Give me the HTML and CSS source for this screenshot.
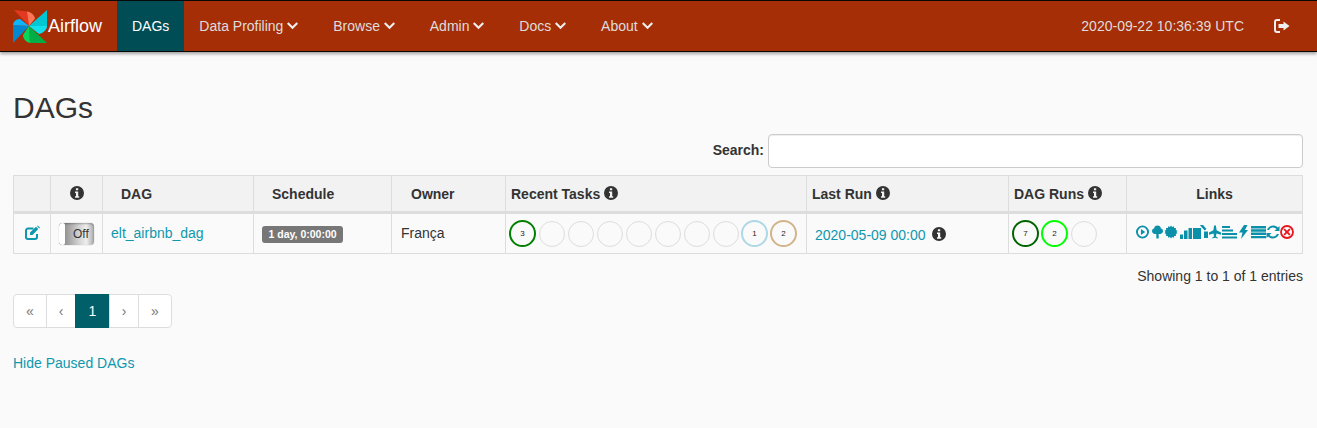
FILE: index.html
```html
<!DOCTYPE html>
<html>
<head>
  <title>DAGs - Airflow</title>
  <link rel="stylesheet" href="styles.css">
</head>
<body>
  <svg class="defs" width="0" height="0">
    <symbol id="i-info" viewBox="0 0 14 14">
      <path fill-rule="evenodd" d="M7 0a7 7 0 1 0 0 14A7 7 0 0 0 7 0zM5.900 2.300h2.300v2H5.900zM5 5.600h3.200v4.700h1v1.500H5v-1.500h1V7.100H5z"/>
    </symbol>
    <symbol id="i-chev" viewBox="0 0 12 8">
      <path d="M1.600 0L6 4.400 10.400 0 12 1.600 6 7.600 0 1.600z"/>
    </symbol>
  </svg>

  <nav class="navbar">
    <a class="brand" href="#">
      <svg class="logo" width="35" height="35" viewBox="0 0 35 35">
        <path fill="#e43921" d="M16 17L1 1l13 1.500z"/>
        <path fill="#ff7557" d="M16 17L14 2.500c4 .5 7 3 8 7z"/>
        <path fill="#0288d1" d="M16 17L0 34V16z"/>
        <path fill="#0cb6ff" d="M16 17L0 16c0-3 3-6 7-6z"/>
        <path fill="#00ad46" d="M16 17l18 17H17z"/>
        <path fill="#04d659" d="M16 17l1 17c-4-1-7-4-7-8z"/>
        <path fill="#00c7d4" d="M16 17L34 1v16z"/>
        <path fill="#11e1ee" d="M16 17l18 0c0 3-3 7-8 8z"/>
      </svg>
      <span>Airflow</span>
    </a>
    <a class="nav-item active" href="#">DAGs</a>
    <a class="nav-item" href="#">Data Profiling <svg class="chev"><use href="#i-chev"/></svg></a>
    <a class="nav-item" href="#">Browse <svg class="chev"><use href="#i-chev"/></svg></a>
    <a class="nav-item" href="#">Admin <svg class="chev"><use href="#i-chev"/></svg></a>
    <a class="nav-item" href="#">Docs <svg class="chev"><use href="#i-chev"/></svg></a>
    <a class="nav-item" href="#">About <svg class="chev"><use href="#i-chev"/></svg></a>
    <div class="nav-right">
      <span class="clock">2020-09-22 10:36:39 UTC</span>
      <svg class="signout" width="16" height="14" viewBox="0 0 16 14">
        <path d="M6 0v2H3a1 1 0 0 0-1 1v8a1 1 0 0 0 1 1h3v2H3a3 3 0 0 1-3-3V3a3 3 0 0 1 3-3z"/>
        <path d="M9.500 2.500L15.500 7l-6 4.500V9H4.500V5h5z"/>
      </svg>
    </div>
  </nav>

  <div class="container">
    <h2>DAGs</h2>

    <div class="search-row">
      <label for="search">Search:</label>
      <input id="search" type="text">
    </div>

    <table class="dags">
      <thead>
        <tr>
          <th class="c-edit"></th>
          <th class="c-toggle"><svg class="info"><use href="#i-info"/></svg></th>
          <th class="c-dag">DAG</th>
          <th class="c-sched">Schedule</th>
          <th class="c-owner">Owner</th>
          <th class="c-tasks">Recent Tasks <svg class="info"><use href="#i-info"/></svg></th>
          <th class="c-last">Last Run <svg class="info"><use href="#i-info"/></svg></th>
          <th class="c-runs">DAG Runs <svg class="info"><use href="#i-info"/></svg></th>
          <th class="c-links">Links</th>
        </tr>
      </thead>
      <tbody>
        <tr>
          <td class="center">
            <svg class="edit" width="15" height="14" viewBox="0 0 15 14">
              <path fill="none" stroke="currentColor" stroke-width="2" d="M8.500 2.500H3A2 2 0 0 0 1 4.500V11a2 2 0 0 0 2 2h7a2 2 0 0 0 2-2V8"/>
              <path d="M5 6.500L11 .8l2.300 2.300L7.500 9H5zM12 0l.8-.5L15 1.700l-.8.800z"/>
            </svg>
          </td>
          <td class="center">
            <div class="toggle"><span class="knob"></span><span class="off">Off</span></div>
          </td>
          <td class="dag-name"><a href="#">elt_airbnb_dag</a></td>
          <td class="sched-cell"><span class="label">1 day, 0:00:00</span></td>
          <td class="owner">França</td>
          <td class="circles-cell">
            <div class="circles">
              <span class="circle success">3</span>
              <span class="circle"></span>
              <span class="circle"></span>
              <span class="circle"></span>
              <span class="circle"></span>
              <span class="circle"></span>
              <span class="circle"></span>
              <span class="circle"></span>
              <span class="circle skipped">1</span>
              <span class="circle upstream">2</span>
            </div>
          </td>
          <td class="last-run"><a href="#">2020-05-09 00:00</a> <svg class="info"><use href="#i-info"/></svg></td>
          <td class="circles-cell">
            <div class="circles">
              <span class="circle finished">7</span>
              <span class="circle running">2</span>
              <span class="circle"></span>
            </div>
          </td>
          <td class="links">
            <svg class="l-play" width="13" height="14" viewBox="0 0 14 14"><circle cx="7" cy="7" r="6" fill="none" stroke="currentColor" stroke-width="2"/><path d="M5.300 3.900L10 7l-4.700 3.100z"/></svg>
            <svg class="l-tree" width="11" height="14" viewBox="0 0 12 14"><path d="M6 0c2.300 0 3.400 1.300 3.500 2.800C11 3.200 12 4.500 12 6c0 1.800-1.400 3.200-3.200 3.200H7.300V14H4.700V9.200H3.200C1.400 9.200 0 7.800 0 6c0-1.500 1-2.800 2.500-3.200C2.600 1.300 3.700 0 6 0z"/></svg>
            <svg class="l-sun" width="12" height="14" viewBox="0 0 13 14"><path d="M6.500 0l1.200 1.700L9.500.8l.4 2 2-.1-.2 2 1.800 1-1.100 1.300 1.100 1.300-1.800 1 .2 2-2-.1-.4 2-1.800-.9L6.500 14l-1.200-1.700-1.800.9-.4-2-2 .1.200-2-1.800-1L.6 7-.5 5.700l1.800-1-.2-2 2 .1.400-2 1.800.9z"/></svg>
            <svg class="l-bars" width="12" height="14" viewBox="0 0 12 14"><path d="M0 9.500h3V14H0zM4 5.500h3.500V14H4zM8.500 3H12v11H8.500z"/></svg>
            <svg class="l-doc" width="16" height="14" viewBox="0 0 16 14"><path d="M0 3h8v11H0zM7 0h3l3.500 4-1.800 1.500L8 1.500zM11 6.500h4V13h-4z"/></svg>
            <svg class="l-plane" width="12" height="14" viewBox="0 0 13 14"><path d="M5.500 0h2l.7 5L13 7.600V10L8 8.500 7.600 12l1.900 1.300V14L6.500 13.300 3.500 14v-.7L5.400 12 5 8.500 0 10V7.600L4.800 5z"/></svg>
            <svg class="l-align" width="15" height="14" viewBox="0 0 15 14"><path d="M0 1h8v2H0zM0 4.500h11v2H0zM0 8h15v2H0zM0 11.500h15v2H0z"/></svg>
            <svg class="l-bolt" width="9" height="14" viewBox="0 0 9 14"><path d="M5 0h3.500L6 5h3L2 14l1.500-6.500H0z"/></svg>
            <svg class="l-just" width="15" height="14" viewBox="0 0 15 14"><path d="M0 1h15v2.400H0zM0 4.300h15v2.400H0zM0 7.600h15V10H0zM0 10.900h15v2.400H0z"/></svg>
            <svg class="l-sync" width="14" height="14" viewBox="0 0 14 14"><path d="M13.500 1v5H8.500l2-2A4.500 4.500 0 0 0 3 5H1a6.500 6.500 0 0 1 10.900-2.400zM.5 13V8h5l-2 2A4.500 4.500 0 0 0 11 9h2a6.500 6.500 0 0 1-10.900 2.400z"/></svg>
            <svg class="del" width="14" height="14" viewBox="0 0 14 14"><circle cx="7" cy="7" r="6" fill="none" stroke="currentColor" stroke-width="1.800"/><path d="M4.800 3.500L7 5.700l2.200-2.200 1.300 1.300L8.300 7l2.200 2.200-1.300 1.300L7 8.300l-2.200 2.200-1.300-1.300L5.700 7 3.500 4.800z"/></svg>
          </td>
        </tr>
      </tbody>
    </table>

    <div class="entries">Showing 1 to 1 of 1 entries</div>

    <ul class="pagination">
      <li><a href="#">«</a></li>
      <li><a href="#">‹</a></li>
      <li class="active"><a href="#">1</a></li>
      <li><a href="#">›</a></li>
      <li><a href="#">»</a></li>
    </ul>

    <div class="hide-paused"><a href="#">Hide Paused DAGs</a></div>
  </div>
</body>
</html>
```

FILE: styles.css
```css
* {
  box-sizing: border-box;
}

body {
  margin: 0;
  font-family: "Liberation Sans", Arial, sans-serif;
  font-size: 14px;
  line-height: 20px;
  background: #fafafa;
  color: #333;
  overflow: hidden;
}

a {
  color: #0e97ae;
  text-decoration: none;
}

.defs {
  display: block;
  height: 0;
}

/* navbar */
.navbar {
  display: flex;
  height: 52px;
  background: #a62e06;
  border-top: 1px solid #080808;
  border-bottom: 1px solid #080808;
  box-shadow: 0 2px 3px rgba(0,0,0,0.35);
  padding-left: 13px;
}

.brand {
  display: flex;
  align-items: center;
  width: 104px;
  color: #fff;
  font-size: 18px;
}

.logo {
  flex: none;
}

.nav-item {
  display: flex;
  align-items: center;
  gap: 4px;
  padding: 0 15px;
  color: #ddd;
}

.nav-item.active {
  background: #004d56;
  color: #fff;
}

.chev {
  width: 11px;
  height: 8px;
  margin-right: 4.850px;
  fill: #eee;
}

.nav-right {
  margin-left: auto;
  display: flex;
  align-items: center;
  color: #ddd;
}

.clock {
  margin-left: 1px;
}

.signout {
  margin: 0 27px 0 30px;
  fill: #eee;
}

/* page */
.container {
  padding: 0 14px 0 13px;
}

h2 {
  margin: 36px 0 0;
  font-size: 30px;
  line-height: 39px;
  font-weight: 400;
  color: #333;
}

.search-row {
  display: flex;
  justify-content: flex-end;
  align-items: center;
  gap: 4px;
  margin-top: 7px;
  height: 34px;
  font-weight: 700;
}

.search-row label {
  margin-bottom: 2px;
}

.search-row input {
  width: 535px;
  height: 34px;
  border: 1px solid #ccc;
  border-radius: 4px;
  background: #fff;
  box-shadow: inset 0 1px 1px rgba(0,0,0,0.075);
}

/* table */
.dags {
  width: 1289px;
  margin-top: 7px;
  border-collapse: collapse;
  table-layout: fixed;
}

.dags th, .dags td {
  border: 1px solid #ddd;
}

.dags th {
  height: 37px;
  padding: 0 5px;
  background: #f2f2f2;
  border-bottom: 3px solid #ddd;
  font-weight: 700;
  text-align: center;
}

.c-edit { width: 37px; }
.c-toggle { width: 52px; }
.dags .c-dag { width: 151px; padding-right: 106px; padding-left: 18px; }
.dags .c-sched { width: 138px; padding-left: 18px; text-align: left; }
.dags .c-owner { width: 114px; padding-left: 19px; text-align: left; }
.dags .c-tasks { width: 301px; text-align: left; }
.dags .c-last { width: 202px; text-align: left; }
.dags .c-runs { width: 118px; text-align: left; }
.c-links { width: 176px; }

.dags td {
  height: 41px;
  padding: 0 5px;
}

.center {
  text-align: center;
  color: #0e97ae;
}

.info {
  width: 14px;
  height: 14px;
  fill: #333;
  vertical-align: -1px;
}

.edit {
  fill: currentColor;
  vertical-align: middle;
  overflow: visible;
  margin-bottom: 3px;
}

.toggle {
  display: flex;
  align-items: center;
  width: 35px;
  height: 22px;
  margin: 0 auto;
  border-radius: 4px;
  background: linear-gradient(90deg, #777, #d0d0d0 55%, #eee 78%, #aaa);
  box-shadow: 0 0 1px rgba(0,0,0,0.4), inset 0 1px 2px rgba(0,0,0,0.3);
  color: #333;
  font-size: 12px;
}

.knob {
  width: 6px;
  height: 22px;
  background: #fff;
  border-radius: 4px 2px 2px 4px;
  flex: none;
}

.off {
  margin-left: 8px;
}

.dags .dag-name {
  padding: 0 5px 2px 8px;
}

.dags .sched-cell {
  padding-left: 8px;
}

.label {
  display: inline-block;
  padding: 0 6.500px;
  height: 17px;
  line-height: 17px;
  background: #777;
  border-radius: 3px;
  color: #fff;
  font-size: 10.500px;
  font-weight: 700;
  vertical-align: middle;
}

.dags .owner {
  padding: 0 5px 2px 9px;
}

.dags .circles-cell {
  padding-left: 3px;
}

.circles {
  display: flex;
  align-items: center;
  height: 28px;
}

.circle {
  width: 26px;
  height: 26px;
  margin-right: 3px;
  border: 1px solid #ddd;
  border-radius: 50%;
  display: flex;
  align-items: center;
  justify-content: center;
  flex: none;
  font-size: 8px;
  color: #222;
  background: #fafafa;
}

.circle.success { border: 2px solid #008000; width: 27px; height: 27px; }
.circle.finished { border: 2px solid #006400; width: 27px; height: 27px; margin-right: 2px; }
.circle.running { border: 2px solid #00ff00; width: 27px; height: 27px; }
.circle.skipped { border: 2px solid #add8e6; width: 27px; height: 27px; margin: 0 2px 0 -1px; }
.circle.upstream { border: 2px solid #d2b48c; width: 27px; height: 27px; }

.dags .last-run {
  padding-left: 8px;
  padding-top: 2px;
}

.last-run .info {
  margin-left: 3px;
}

.dags .links {
  color: #0a90a8;
  white-space: nowrap;
  font-size: 0;
  padding: 0 5px 3px 9px;
}

.links svg {
  fill: currentColor;
  vertical-align: middle;
  overflow: visible;
}

.links .l-play { margin-right: 3px; }
.links .l-tree { margin-right: 2px; }
.links .l-sun { margin-right: 3px; }
.links .l-bars { margin-right: 1px; }
.links .l-plane { margin-right: 1px; }
.links .l-align { margin-right: 2px; }
.links .l-bolt { margin-right: 3px; }

.links .del {
  color: #e8141c;
}

.entries {
  margin-top: 12px;
  text-align: right;
}

.pagination {
  display: flex;
  list-style: none;
  margin: 8px 0 0;
  padding: 0;
}

.pagination a {
  display: block;
  height: 34px;
  line-height: 32px;
  padding: 0 12px;
  background: #fff;
  border: 1px solid #ddd;
  margin-left: -1px;
  color: #777;
}

.pagination li:first-child a {
  margin-left: 0;
  border-radius: 4px 0 0 4px;
}

.pagination li:last-child a {
  border-radius: 0 4px 4px 0;
}

.pagination .active a {
  background: #005f68;
  border-color: #005f68;
  color: #fff;
}

.pagination .active + li a {
  margin-left: 0;
  padding: 0 11.500px;
}

.hide-paused {
  margin-top: 25px;
}
```
